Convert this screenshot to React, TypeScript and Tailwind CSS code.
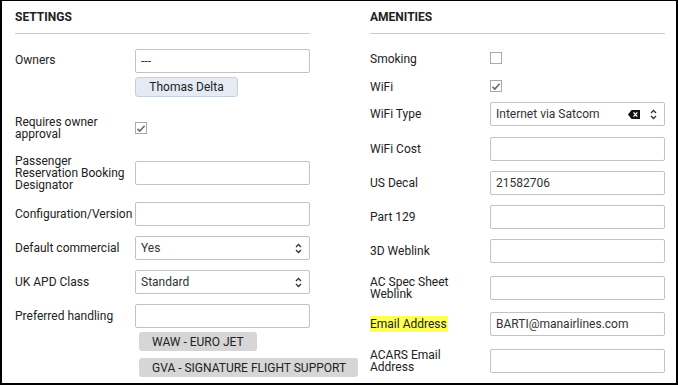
import React from "react";

const font = { fontFamily: "Roboto, 'Liberation Sans', sans-serif" };

function Chevrons() {
  return (
    <svg width="7" height="11" viewBox="0 0 7 11" className="shrink-0">
      <path d="M1 4 L3.5 1.5 L6 4" fill="none" stroke="#333" strokeWidth="1.3" />
      <path d="M1 7 L3.5 9.5 L6 7" fill="none" stroke="#333" strokeWidth="1.3" />
    </svg>
  );
}

function ClearIcon() {
  return (
    <svg width="12" height="9" viewBox="0 0 12 9" className="shrink-0">
      <path d="M3.5 0 H12 V9 H3.5 L0 4.5 Z" fill="#111" />
      <path d="M5.5 2.3 L9.3 6.7 M9.3 2.3 L5.5 6.7" stroke="#fff" strokeWidth="1.3" />
    </svg>
  );
}

function Input({ value }: { value?: string }) {
  return (
    <div className="w-[175px] h-[24px] border border-[#c2c2c2] rounded-[2px] bg-white flex items-center pl-[5px] text-[#333] leading-none">
      {value}
    </div>
  );
}

function Select({ value, clear }: { value: string; clear?: boolean }) {
  return (
    <div className="w-[175px] h-[24px] border border-[#c2c2c2] rounded-[2px] bg-white flex items-center pl-[5px] pr-[7px] text-[#333]">
      <span className="flex-1 leading-none">{value}</span>
      {clear && (
        <span className="mr-[10px] flex">
          <ClearIcon />
        </span>
      )}
      <Chevrons />
    </div>
  );
}

function Checkbox({ checked }: { checked?: boolean }) {
  return (
    <div className="w-[12px] h-[12px] border border-[#a9a9a9] bg-white flex items-center justify-center">
      {checked && (
        <svg width="10" height="9" viewBox="0 0 10 9">
          <path d="M1.5 4.8 L3.8 7 L8.6 1.8" fill="none" stroke="#6a6a6a" strokeWidth="1.6" />
        </svg>
      )}
    </div>
  );
}

function Row({
  label,
  children,
  className = "",
}: {
  label: React.ReactNode;
  children: React.ReactNode;
  className?: string;
}) {
  return (
    <div className={`flex items-center ${className}`}>
      <div className="w-[120px] shrink-0 leading-[12px] text-[#222]">{label}</div>
      {children}
    </div>
  );
}

function Heading({ title }: { title: string }) {
  return (
    <div className="pt-[8px]">
      <div className="font-bold text-[12px] leading-[16px] text-[#222]">{title}</div>
      <div className="mt-[8px] h-px bg-[#c9cdd9]" />
    </div>
  );
}

export default function App() {
  return (
    <div
      className="w-[678px] h-[385px] bg-white border-x-2 border-b-2 border-t border-black flex text-[12px] overflow-hidden"
      style={font}
    >
      {/* settings */}
      <div className="ml-[13px] w-[295px] flex flex-col">
        <Heading title="SETTINGS" />

        <div className="flex mt-[15px]">
          <div className="w-[120px] shrink-0 pt-[4px] leading-[14px] text-[#222]">Owners</div>
          <div className="flex flex-col">
            <Input value="---" />
            <div className="mt-[4px] h-[20px] w-[103px] rounded-[3px] border border-[#c5d0dd] bg-[#e4ebf4] flex items-center justify-center text-[#222]">
              Thomas Delta
            </div>
          </div>
        </div>

        <Row className="mt-[19px] h-[24px]" label={<>Requires owner<br />approval</>}>
          <Checkbox checked />
        </Row>

        <Row className="mt-[15px] h-[36px]" label={<>Passenger<br />Reservation Booking<br />Designator</>}>
          <Input />
        </Row>

        <Row className="mt-[11px]" label="Configuration/Version">
          <Input />
        </Row>

        <Row className="mt-[10px]" label="Default commercial">
          <Select value="Yes" />
        </Row>

        <Row className="mt-[10px]" label="UK APD Class">
          <Select value="Standard" />
        </Row>

        <Row className="mt-[10px]" label="Preferred handling">
          <Input />
        </Row>

        <div className="pl-[124px] flex flex-col items-start">
          <div className="mt-[4px] h-[19px] w-[118px] rounded-[3px] bg-[#d6d6d6] flex items-center pl-[13px] text-[#222] whitespace-nowrap">
            WAW - EURO JET
          </div>
          <div className="mt-[7px] h-[19px] w-[219px] rounded-[3px] bg-[#d6d6d6] flex items-center pl-[13px] text-[#222] whitespace-nowrap">
            GVA - SIGNATURE FLIGHT SUPPORT
          </div>
        </div>
      </div>

      {/* amenities */}
      <div className="ml-[60px] w-[295px] flex flex-col">
        <Heading title="AMENITIES" />

        <Row className="mt-[13px] h-[24px]" label="Smoking">
          <div className="-mt-[2px]">
            <Checkbox />
          </div>
        </Row>

        <Row className="mt-[4px] h-[24px]" label="WiFi">
          <div className="-mt-[2px]">
            <Checkbox checked />
          </div>
        </Row>

        <Row className="mt-[3px]" label="WiFi Type">
          <Select value="Internet via Satcom" clear />
        </Row>

        <Row className="mt-[11px]" label="WiFi Cost">
          <Input />
        </Row>

        <Row className="mt-[10px]" label="US Decal">
          <Input value="21582706" />
        </Row>

        <Row className="mt-[10px]" label="Part 129">
          <Input />
        </Row>

        <Row className="mt-[10px]" label="3D Weblink">
          <Input />
        </Row>

        <Row className="mt-[13px]" label={<>AC Spec Sheet<br />Weblink</>}>
          <Input />
        </Row>

        <Row
          className="mt-[12px]"
          label={<span className="bg-[#ffff5a] py-[1px] pr-[1px]">Email Address</span>}
        >
          <Input value="BARTI@manairlines.com" />
        </Row>

        <Row className="mt-[13px]" label={<>ACARS Email<br />Address</>}>
          <Input />
        </Row>
      </div>
    </div>
  );
}
